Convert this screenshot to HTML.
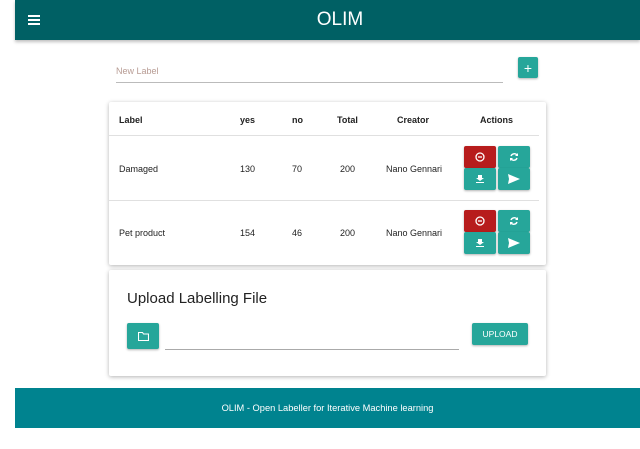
<!DOCTYPE html>
<html><head><style>
*{box-sizing:border-box;margin:0;padding:0}
body{width:640px;height:449px;background:#fff;font-family:"Liberation Sans",sans-serif;position:relative;overflow:hidden;color:#222}
.abs{position:absolute}
.hdr{left:15px;top:0;width:625px;height:40px;background:#006064;box-shadow:0 2px 3px rgba(0,0,0,.25)}
.card{background:#fff;box-shadow:0 1px 4px rgba(0,0,0,.3);border-radius:2px}
.btn{position:absolute;border-radius:2px;box-shadow:0 1px 2px rgba(0,0,0,.3);color:#fff;display:flex;align-items:center;justify-content:center}
.r{background:#b71c1c}.t{background:#26a69a}
.th{font-size:9px;font-weight:bold;position:absolute;top:115px}
.td{font-size:9px;position:absolute}
</style></head><body>
<div class="abs hdr"></div>
<div class="abs" style="left:28px;top:15px;width:12px;height:2px;background:#fff;box-shadow:0 4px 0 #fff,0 8px 0 #fff"></div>
<div class="abs" style="left:0;width:680px;top:9px;text-align:center;color:#fff;font-size:19px">OLIM</div>

<div class="abs" style="left:116px;top:66px;font-size:9px;color:#b89c94">New Label</div>
<div class="abs" style="left:116px;top:82px;width:387px;height:1px;background:#bbb"></div>
<div class="btn t" style="left:518px;top:57px;width:20px;height:21px;font-size:14px">+</div>

<div class="abs card" style="left:109px;top:102px;width:437px;height:163px"></div>
<div class="th" style="left:119px">Label</div>
<div class="th" style="left:240px">yes</div>
<div class="th" style="left:292px">no</div>
<div class="th" style="left:337px">Total</div>
<div class="th" style="left:397px">Creator</div>
<div class="th" style="left:480px">Actions</div>
<div class="abs" style="left:109px;top:135px;width:430px;height:1px;background:#e0e0e0"></div>
<div class="abs" style="left:109px;top:200px;width:430px;height:1px;background:#e0e0e0"></div>

<div class="td" style="left:119px;top:164px">Damaged</div>
<div class="td" style="left:240px;top:164px">130</div>
<div class="td" style="left:292px;top:164px">70</div>
<div class="td" style="left:340px;top:164px">200</div>
<div class="td" style="left:386px;top:164px">Nano Gennari</div>
<div class="td" style="left:119px;top:228px">Pet product</div>
<div class="td" style="left:240px;top:228px">154</div>
<div class="td" style="left:292px;top:228px">46</div>
<div class="td" style="left:340px;top:228px">200</div>
<div class="td" style="left:386px;top:228px">Nano Gennari</div>

<div class="btn r" style="left:464px;top:146px;width:32px;height:22px"><svg width="10" height="10"><circle cx="5" cy="5" r="4" fill="none" stroke="#fff" stroke-width="1.3"/><path d="M3 5h4" stroke="#fff" stroke-width="1.3"/></svg></div>
<div class="btn t" style="left:498px;top:146px;width:32px;height:22px"><svg width="10" height="10"><path d="M8 3A3.5 3.5 0 0 0 2 4M2 7A3.5 3.5 0 0 0 8 6" fill="none" stroke="#fff" stroke-width="1.4"/><path d="M9 1v3H6z M1 9V6h3z" fill="#fff"/></svg></div>
<div class="btn t" style="left:464px;top:168px;width:32px;height:22px"><svg width="8" height="8"><path d="M2 0h4v3h2l-4 3-4-3h2z M0 7h8v1H0z" fill="#fff"/></svg></div>
<div class="btn t" style="left:498px;top:168px;width:32px;height:22px"><svg width="12" height="10"><path d="M0 0L12 5L0 10L1 5z" fill="#fff"/></svg></div>

<div class="btn r" style="left:464px;top:210px;width:32px;height:22px"><svg width="10" height="10"><circle cx="5" cy="5" r="4" fill="none" stroke="#fff" stroke-width="1.3"/><path d="M3 5h4" stroke="#fff" stroke-width="1.3"/></svg></div>
<div class="btn t" style="left:498px;top:210px;width:32px;height:22px"><svg width="10" height="10"><path d="M8 3A3.5 3.5 0 0 0 2 4M2 7A3.5 3.5 0 0 0 8 6" fill="none" stroke="#fff" stroke-width="1.4"/><path d="M9 1v3H6z M1 9V6h3z" fill="#fff"/></svg></div>
<div class="btn t" style="left:464px;top:232px;width:32px;height:22px"><svg width="8" height="8"><path d="M2 0h4v3h2l-4 3-4-3h2z M0 7h8v1H0z" fill="#fff"/></svg></div>
<div class="btn t" style="left:498px;top:232px;width:32px;height:22px"><svg width="12" height="10"><path d="M0 0L12 5L0 10L1 5z" fill="#fff"/></svg></div>

<div class="abs card" style="left:109px;top:270px;width:437px;height:106px"></div>
<div class="abs" style="left:127px;top:290px;font-size:15px;color:#222">Upload Labelling File</div>
<div class="btn t" style="left:127px;top:323px;width:32px;height:26px"><svg width="11" height="9"><path d="M0.5 0.5h4l1 1.5h5v6.5h-10z" fill="none" stroke="#fff" stroke-width="1.1"/></svg></div>
<div class="abs" style="left:165px;top:349px;width:294px;height:1px;background:#aaa"></div>
<div class="btn t" style="left:472px;top:323px;width:56px;height:22px;font-size:8.5px">UPLOAD</div>

<div class="abs" style="left:15px;top:388px;width:625px;height:40px;background:#00838f"></div>
<div class="abs" style="left:15px;top:403px;width:625px;text-align:center;color:#fff;font-size:9.3px">OLIM - Open Labeller for Iterative Machine learning</div>
</body></html>
